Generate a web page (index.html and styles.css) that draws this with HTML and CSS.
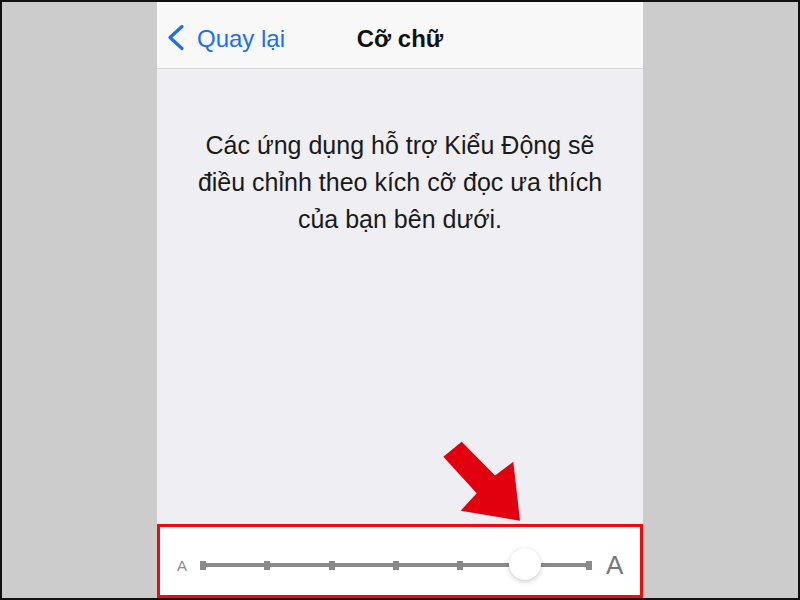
FILE: index.html
```html
<!DOCTYPE html>
<html lang="vi">
<head>
  <meta charset="UTF-8">
  <title>Cỡ chữ</title>
  <link rel="stylesheet" href="styles.css">
</head>
<body>
  <div class="frame">
    <div class="side"></div>

    <div class="phone">
      <div class="navbar">
        <a class="back" href="#">
          <svg class="chevron" width="16" height="26" viewBox="0 0 16 26">
            <path d="M14 1.5 L2 12.5 L14 23.5" fill="none" stroke="#1a6ff0" stroke-width="3.2" stroke-linecap="round" stroke-linejoin="round"/>
          </svg>
          Quay lại
        </a>
        <div class="title">Cỡ chữ</div>
        <div></div>
      </div>

      <div class="content">
        <p class="hint">Các ứng dụng hỗ trợ Kiểu Động sẽ<br>điều chỉnh theo kích cỡ đọc ưa thích<br>của bạn bên dưới.</p>
      </div>

      <div class="size-row">
        <span class="a-small">A</span>
        <div class="track">
          <span class="tick"></span>
          <span class="tick"></span>
          <span class="tick"></span>
          <span class="tick"></span>
          <span class="tick"></span>
          <span class="tick"></span>
          <span class="tick"></span>
          <span class="thumb"></span>
        </div>
        <span class="a-big">A</span>
      </div>
    </div>

    <div class="side"></div>

    <!-- pointer toward the slider -->
    <svg class="pointer" width="84" height="86" viewBox="0 0 84 86">
      <polygon points="21.7,3.7 3.3,18.7 36.7,55.3 20.7,72.7 80,82.7 73.3,23.7 55,37.5" fill="#e2000f"/>
    </svg>
  </div>
</body>
</html>
```

FILE: styles.css
```css
body {
  margin: 0;
  font-family: "Liberation Sans", Arial, sans-serif;
}
.frame {
  position: relative;
  width: 800px;
  height: 600px;
  box-sizing: border-box;
  border: 2px solid #111;
  display: flex;
  background: #cccccc;
}
.side {
  flex: 1;
}
.phone {
  width: 486px;
  display: flex;
  flex-direction: column;
  background: #eeeef3;
}
.navbar {
  height: 67px;
  box-sizing: border-box;
  background: #f8f8f9;
  border-bottom: 1px solid #d9d9dc;
  display: grid;
  grid-template-columns: 1fr auto 1fr;
  align-items: center;
  padding: 7px 11px 0;
}
.back {
  display: flex;
  align-items: center;
  gap: 13px;
  color: #1a6ff0;
  text-decoration: none;
  font-size: 24px;
}
.chevron {
  margin-top: -2px;
}
.title {
  font-size: 24px;
  font-weight: bold;
  color: #111;
}
.content {
  flex: 1;
}
.hint {
  margin: 58px 0 0;
  text-align: center;
  font-size: 25px;
  line-height: 37px;
  color: #1a1a1a;
}
.size-row {
  height: 74px;
  box-sizing: border-box;
  border: 3px solid #f00a0a;
  background: #fff;
  display: flex;
  align-items: center;
  padding: 8px 16px 0 17px;
}
.a-small {
  font-size: 15px;
  color: #8a8a8a;
  width: 10px;
}
.a-big {
  font-size: 26px;
  color: #777;
  width: 18px;
}
.track {
  position: relative;
  flex: 1;
  margin: 0 17px 0 16px;
  height: 9px;
  display: flex;
  justify-content: space-between;
  align-items: center;
  background: linear-gradient(#8a8a8a, #8a8a8a) center / 100% 4px no-repeat;
}
.tick {
  width: 6px;
  height: 9px;
  background: #8a8a8a;
}
.tick:first-child {
  margin-left: -3px;
}
.tick:nth-child(7) {
  margin-right: -3px;
}
.thumb {
  position: absolute;
  left: 83.3%;
  top: 50%;
  width: 32px;
  height: 32px;
  margin: -17px 0 0 -16px;
  border-radius: 50%;
  background: #fff;
  box-shadow: 0 2px 5px rgba(0, 0, 0, 0.18), 0 0 1px rgba(0, 0, 0, 0.12);
}
.pointer {
  position: absolute;
  left: 438px;
  top: 436px;
}
```
